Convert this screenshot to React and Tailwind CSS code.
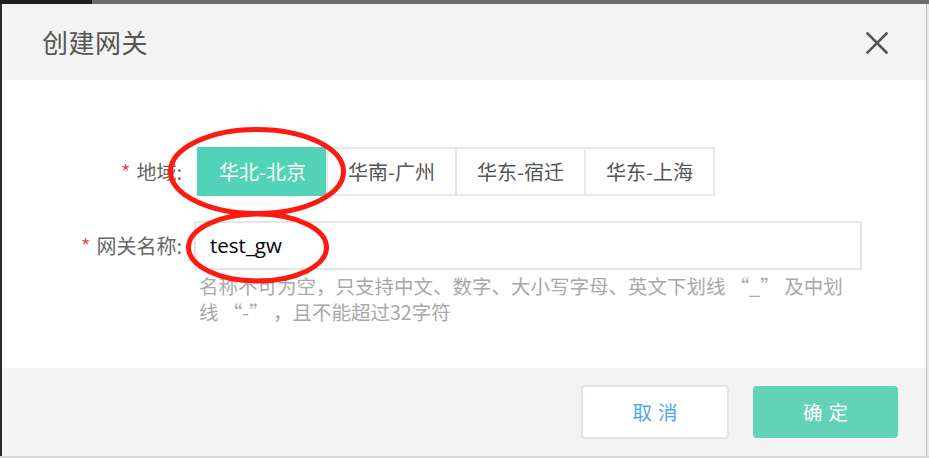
export default function App() {
  const tabs = ["华北-北京", "华南-广州", "华东-宿迁", "华东-上海"];
  const cjk = { fontFamily: '"Noto Sans CJK SC", "Noto Sans", sans-serif' };
  return (
    <div
      className="relative w-[929px] h-[458px] overflow-hidden bg-[#6b6c6e] flex flex-col"
      style={cjk}
    >
      {/* top strip behind the modal */}
      <div className="h-[4px] flex shrink-0">
        <div className="w-[92px] bg-[#1d1e22]" />
        <div className="flex-1 bg-[#6b6c6e]" />
      </div>
      <div className="flex flex-1">
        <div className="w-[2px] bg-[#2a2b30]" />
        {/* modal */}
        <div className="w-[924px] h-[452px] flex flex-col bg-white">
          {/* header */}
          <div className="h-[76px] shrink-0 bg-[#f3f3f3] flex items-center justify-between pl-[40px] pr-[38px]">
            <span className="text-[26px] leading-none text-[#555] tracking-[0.5px]">创建网关</span>
            <svg width="22" height="22" viewBox="0 0 22 22" className="mt-[1px]">
              <path d="M1.5 1.5 L20.5 20.5 M20.5 1.5 L1.5 20.5" stroke="#555" strokeWidth="2.6" strokeLinecap="square" fill="none" />
            </svg>
          </div>
          {/* body */}
          <div className="h-[288px] shrink-0 bg-white pt-[67px] flex flex-col gap-[25px]">
            <div className="flex items-center">
              <div className="w-[180px] text-right text-[20px] text-[#666] leading-none">
                <span className="text-[#e0504a] mr-[6px]">*</span>地域:
              </div>
              <div className="ml-[15px] flex">
                {tabs.map((t, i) => (
                  <div
                    key={t}
                    className={
                      i === 0
                        ? "w-[131px] h-[49px] flex items-center justify-center bg-[#52d2b6] text-white text-[20px]"
                        : "w-[131px] h-[49px] -ml-[2px] flex items-center justify-center border-2 border-[#e8e8e8] bg-white text-[#555] text-[20px]"
                    }
                  >
                    {t}
                  </div>
                ))}
              </div>
            </div>
            <div className="flex">
              <div className="w-[180px] h-[49px] flex items-center justify-end text-[20px] text-[#666] leading-none">
                <span className="text-[#e0504a] mr-[6px]">*</span>网关名称:
              </div>
              <div className="ml-[12px] flex flex-col">
                <div className="w-[668px] h-[49px] border-2 border-[#e6e6e6] flex items-center pl-[14px]">
                  <span
                    className="text-[20.5px] text-black leading-none"
                    style={{ fontFamily: '"Open Sans", "Noto Sans CJK SC", sans-serif' }}
                  >
                    test_gw
                  </span>
                </div>
                <div className="mt-[4px] pl-[5px] whitespace-nowrap text-[19.5px] text-[#a8a8a8] flex flex-col gap-[2px]">
                  <span className="h-[24px] leading-[24px] block">
                    名称不可为空，只支持中文、数字、大小写字母、英文下划线 “_” 及中划
                  </span>
                  <span className="h-[24px] leading-[24px] block">线 “-” ，且不能超过32字符</span>
                </div>
              </div>
            </div>
          </div>
          {/* footer */}
          <div className="flex-1 bg-[#f3f3f3] flex items-center justify-end pr-[28px] gap-[24px]">
            <button className="w-[148px] h-[54px] rounded-[4px] border-2 border-[#dfe5ec] bg-white text-[#4ea6f0] text-[19.5px] tracking-[6px] pl-[6px]">
              取消
            </button>
            <button className="w-[145px] h-[52px] rounded-[4px] bg-[#62d3b6] text-white text-[19.5px] tracking-[6px] pl-[6px]">
              确定
            </button>
          </div>
        </div>
        <div className="flex-1 bg-[#e9e9e9] border-l border-[#bdbdbd]" />
      </div>
      <div className="h-[2px] shrink-0 bg-[#d8d8d8]" />

      {/* red annotation ellipses */}
      <svg className="absolute left-0 top-0 pointer-events-none" width="929" height="458">
        <ellipse cx="257" cy="171.5" rx="86.5" ry="42" fill="none" stroke="#ff1a10" strokeWidth="5" />
        <ellipse cx="257.5" cy="247.5" rx="69" ry="33.5" fill="none" stroke="#ff1a10" strokeWidth="5" />
      </svg>
    </div>
  );
}
